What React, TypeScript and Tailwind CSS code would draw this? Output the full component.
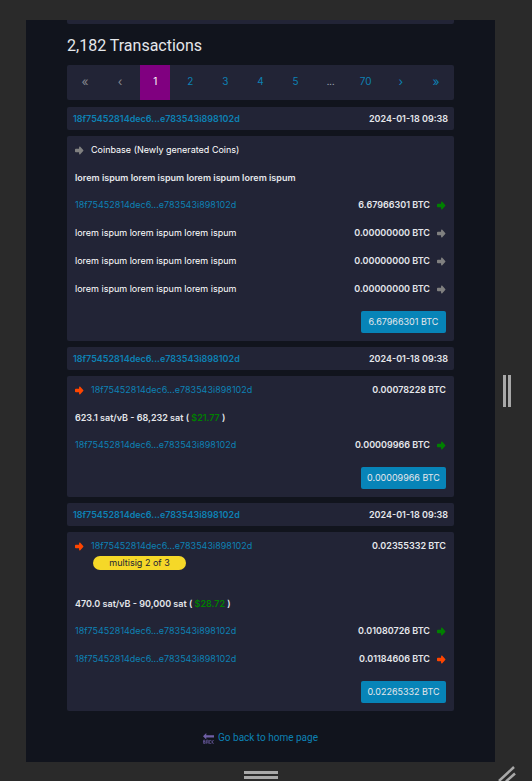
import React from "react";

type Tone = "spent" | "unspent" | "none";

interface Output {
  label: string;
  isLink: boolean;
  amount: string;
  tone: Tone;
}

interface Transaction {
  id: string;
  inputLabel: string;
  inputIsLink: boolean;
  inputTone: Tone;
  inputAmount?: string;
  multisig?: string;
  note: string;
  fiat?: string;
  outputs: Output[];
  total: string;
}

const HASH = "18f75452814dec6...e783543i898102d";
const LOREM = "lorem ispum lorem ispum lorem ispum";

const TRANSACTIONS: Transaction[] = [
  {
    id: "coinbase",
    inputLabel: "Coinbase (Newly generated Coins)",
    inputIsLink: false,
    inputTone: "none",
    note: "lorem ispum lorem ispum lorem ispum lorem ispum",
    outputs: [
      { label: HASH, isLink: true, amount: "6.67966301 BTC", tone: "unspent" },
      { label: LOREM, isLink: false, amount: "0.00000000 BTC", tone: "none" },
      { label: LOREM, isLink: false, amount: "0.00000000 BTC", tone: "none" },
      { label: LOREM, isLink: false, amount: "0.00000000 BTC", tone: "none" },
    ],
    total: "6.67966301 BTC",
  },
  {
    id: "second",
    inputLabel: HASH,
    inputIsLink: true,
    inputTone: "spent",
    inputAmount: "0.00078228 BTC",
    note: "623.1 sat/vB - 68,232 sat",
    fiat: "$21.77",
    outputs: [
      { label: HASH, isLink: true, amount: "0.00009966 BTC", tone: "unspent" },
    ],
    total: "0.00009966 BTC",
  },
  {
    id: "third",
    inputLabel: HASH,
    inputIsLink: true,
    inputTone: "spent",
    inputAmount: "0.02355332 BTC",
    multisig: "multisig 2 of 3",
    note: "470.0 sat/vB - 90,000 sat",
    fiat: "$28.72",
    outputs: [
      { label: HASH, isLink: true, amount: "0.01080726 BTC", tone: "unspent" },
      { label: HASH, isLink: true, amount: "0.01184606 BTC", tone: "spent" },
    ],
    total: "0.02265332 BTC",
  },
];

const PAGES = ["«", "‹", "1", "2", "3", "4", "5", "...", "70", "›", "»"];

const TONE_CLASS: Record<Tone, string> = {
  spent: "text-[#ff4500]",
  unspent: "text-[#008000]",
  none: "text-[#808080]",
};

function ArrowIcon({ tone }: { tone: Tone }) {
  return (
    <svg
      viewBox="0 0 16 16"
      aria-hidden="true"
      className={`size-[9px] shrink-0 ${TONE_CLASS[tone]}`}
      fill="currentColor"
    >
      <path d="M1.500 4.800h5.700V2.600c0-1.400 1.300-2 2.200-1.100l5.200 5.400c.6.6.6 1.600 0 2.200l-5.200 5.400c-.9.900-2.200.3-2.200-1.100v-2.200H1.500C.7 11.200 0 10.500 0 9.700V6.300c0-.8.7-1.500 1.500-1.500z" />
    </svg>
  );
}

function BackIcon() {
  return (
    <svg viewBox="0 0 20 20" aria-hidden="true" className="size-[11px] shrink-0 text-[#6f5fa6]">
      <path d="M0 6l6-6v4h14v4H6v4z" fill="currentColor" />
      <path
        d="M1 13v6M1 13h2.500v3H1M1 16h3v3H1M6.500 19.500V13h3v6.500M6.500 16.500h3M14.500 13.500h-3v5.500h3M16.500 13v6.500M19.500 13l-3 3 3 3.500"
        fill="none"
        stroke="currentColor"
        strokeWidth="1.2"
      />
    </svg>
  );
}

function Address({ text, isLink }: { text: string; isLink: boolean }) {
  return isLink ? (
    <a href="#address" className="text-[#0d81b4]">
      {text}
    </a>
  ) : (
    <span className="text-white">{text}</span>
  );
}

function Pagination() {
  return (
    <nav
      aria-label="Pages"
      className="flex h-[35px] items-stretch justify-between rounded-xs bg-[#222436] px-[3px] text-[10px]"
    >
      {PAGES.map((page, index) => {
        const base = "flex w-[30px] items-center justify-center pb-0.5";
        if (page === "...") {
          return (
            <span key={page} className={`${base} text-[9px] text-gray-400`}>
              {page}
            </span>
          );
        }
        if (page === "1") {
          return (
            <button key={page} type="button" aria-current="page" className={`${base} bg-[#800080] text-white`}>
              {page}
            </button>
          );
        }
        if (index < 2) {
          return (
            <button key={page} type="button" disabled className={`${base} text-xs text-[#85868e]`}>
              {page}
            </button>
          );
        }
        return (
          <button key={page} type="button" className={`${base} ${index > 8 ? "text-xs" : ""} text-[#0d81b4]`}>
            {page}
          </button>
        );
      })}
    </nav>
  );
}

function TransactionBlock({ tx }: { tx: Transaction }) {
  return (
    <article className="flex flex-col gap-1.5">
      <header className="flex h-[23px] items-center justify-between rounded-xs bg-[#222436] px-1.5 font-semibold">
        <a href="#transaction" className="text-[#0d81b4]">
          {HASH}
        </a>
        <time dateTime="2024-01-18T09:38" className="text-gray-200">
          2024-01-18 09:38
        </time>
      </header>
      <div className="flex flex-col rounded-xs bg-[#222436] px-2 pb-2">
        <div className="flex justify-between py-1 leading-5">
          <div className="flex gap-[7px]">
            <span className="flex h-5 items-center">
              <ArrowIcon tone={tx.inputTone} />
            </span>
            <div className="flex flex-col">
              <Address text={tx.inputLabel} isLink={tx.inputIsLink} />
              {tx.multisig && (
                <span className="mb-4 ml-0.5 h-3.5 w-[93px] rounded-full bg-[#f5d828] text-center leading-3.5 text-[#222436]">
                  {tx.multisig}
                </span>
              )}
            </div>
          </div>
          {tx.inputAmount && <span className="font-semibold text-gray-200">{tx.inputAmount}</span>}
        </div>
        <p className="h-[27px] leading-7 font-semibold text-gray-200">
          {tx.note}
          {tx.fiat && (
            <>
              {" ( "}
              <span className="text-[#008000]">{tx.fiat}</span>
              {" )"}
            </>
          )}
        </p>
        <ul>
          {tx.outputs.map((output, index) => (
            <li key={index} className="flex h-7 items-center justify-between">
              <Address text={output.label} isLink={output.isLink} />
              <span className="flex items-center gap-[7px] font-semibold text-gray-200">
                {output.amount}
                <ArrowIcon tone={output.tone} />
              </span>
            </li>
          ))}
        </ul>
        <button
          type="button"
          className="mt-2 h-[22px] w-[85px] self-end rounded-xs bg-[#0784b8] text-center text-gray-200"
        >
          {tx.total}
        </button>
      </div>
    </article>
  );
}

export default function App() {
  return (
    <div className="grid min-h-screen grid-cols-[26px_1fr_37px] grid-rows-[20px_1fr_19px] overflow-hidden bg-[#2a2a2a] font-[Inter,sans-serif] text-[9px]">
      <main className="col-start-2 row-start-2 bg-[#11141d] px-[41px]">
        <div className="h-1 rounded-b-xs bg-[#222436]" />
        <h1 className="mt-2.5 mb-[7px] font-[Roboto,sans-serif] text-base leading-6 text-gray-200">
          2,182 Transactions
        </h1>
        <div className="flex flex-col gap-1.5">
          <div className="pb-px">
            <Pagination />
          </div>
          {TRANSACTIONS.map((tx) => (
            <TransactionBlock key={tx.id} tx={tx} />
          ))}
        </div>
        <footer className="flex justify-center pt-[17px] pb-3.5 font-[Roboto,sans-serif] text-[10px]">
          <a href="#home" className="flex items-center gap-1 leading-5 text-[#0d81b4]">
            <BackIcon />
            Go back to home page
          </a>
        </footer>
      </main>
      <div className="col-start-3 row-start-2 flex items-center gap-0.5 pl-2">
        <span className="h-8 w-[3px] bg-[#a8a8a8]" />
        <span className="h-8 w-[3px] bg-[#a8a8a8]" />
      </div>
      <div className="col-start-2 row-start-3 flex flex-col items-center gap-0.5 pt-[9px]">
        <span className="h-[3px] w-[34px] shrink-0 bg-[#a8a8a8]" />
        <span className="h-[3px] w-[34px] shrink-0 bg-[#a8a8a8]" />
      </div>
      <svg viewBox="0 0 24 19" aria-hidden="true" className="col-start-3 row-start-3 h-[19px] w-6" stroke="#a8a8a8" strokeWidth="2.500">
        <path d="M4 19L19 5M11 19.500L20 11.500" fill="none" />
      </svg>
    </div>
  );
}
